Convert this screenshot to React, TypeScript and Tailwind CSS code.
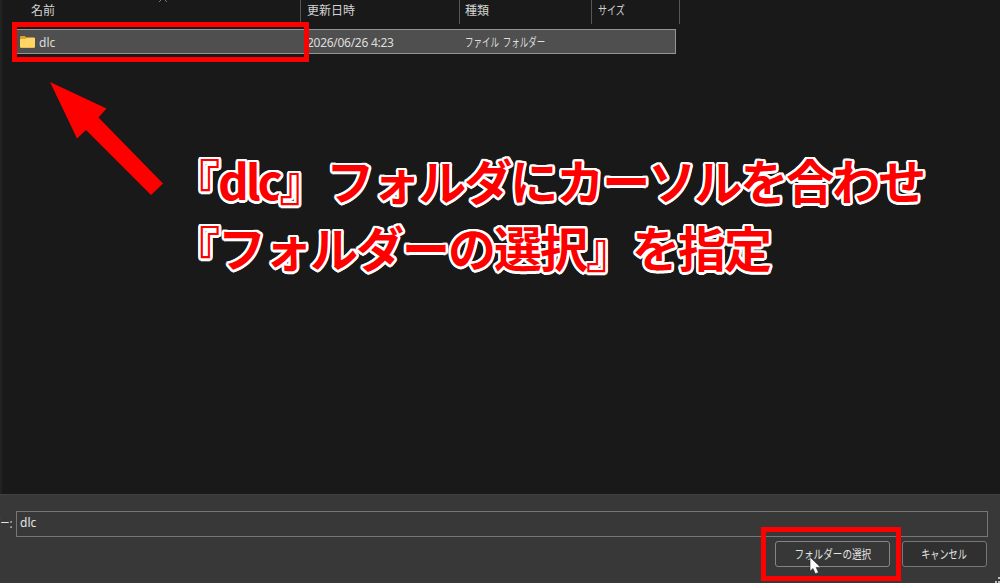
import type { ReactNode } from "react";

const uiFont = "font-['Noto_Sans','Noto_Sans_CJK_JP',sans-serif]";

function HeaderCell({ width, pad, children }: { width: string; pad: string; children: ReactNode }) {
  return (
    <div className={`h-6 shrink-0 border-r border-[#555] ${width} ${pad}`}>
      <span className="block text-[12px] leading-[22px] text-[#d4d4d4]">{children}</span>
    </div>
  );
}

function Folder() {
  return (
    <svg className="h-[12px] w-[15px] shrink-0" viewBox="0 0 15 12">
      <path d="M0 1.2Q0 0 1.2 0H4.8L6.5 1.5H13.8Q15 1.5 15 2.7V10.8Q15 12 13.8 12H1.2Q0 12 0 10.8Z" fill="#dda32d" />
      <path d="M0 4Q0 3 1 3H5.2L7 1.8H14Q15 1.8 15 3V10.5Q15 11.6 13.8 11.6H1.2Q0 11.6 0 10.5Z" fill="#ffd566" />
    </svg>
  );
}

function Caption() {
  return (
    <div className="absolute left-[172px] top-[146px] whitespace-nowrap font-['Noto_Sans_CJK_JP',sans-serif] text-[48px] font-bold leading-[67px] tracking-[-2px] text-[#ff0000] [text-shadow:2.5px_0_#fff,2.3px_1px_#fff,1.8px_1.8px_#fff,1px_2.3px_#fff,0_2.5px_#fff,-1px_2.3px_#fff,-1.8px_1.8px_#fff,-2.3px_1px_#fff,-2.5px_0_#fff,-2.3px_-1px_#fff,-1.8px_-1.8px_#fff,-1px_-2.3px_#fff,0_-2.5px_#fff,1px_-2.3px_#fff,1.8px_-1.8px_#fff,2.3px_-1px_#fff]">
      <div>
        『<span className="tracking-[-3.3px]">dlc</span>
        <span className="tracking-[-1.2px]">』</span>フォルダにカーソルを合わせ
      </div>
      <div>『フォルダーの選択』を指定</div>
    </div>
  );
}

export default function App() {
  return (
    <main className={`relative flex h-[583px] w-[1000px] flex-col overflow-hidden bg-[#191919] ${uiFont}`}>
      <section className="flex h-[494px] shrink-0 flex-col border-l-2 border-[#222]">
        <header className="flex h-[29px] shrink-0">
          <HeaderCell width="w-[299px]" pad="pl-[29px]">名前</HeaderCell>
          <HeaderCell width="w-[159px]" pad="pl-[6px]">更新日時</HeaderCell>
          <HeaderCell width="w-[132px]" pad="pl-[5px]">種類</HeaderCell>
          <HeaderCell width="w-[88px]" pad="pl-[6px]">
            <span className="inline-block origin-left scale-x-[.75]">サイズ</span>
          </HeaderCell>
        </header>
        <div className="ml-[14px] flex h-[25px] w-[660px] shrink-0 items-center border border-[#949494] bg-[#4f4f4f] text-[12px] leading-[18px] text-[#dedede]">
          <div className="flex w-[290px] items-center gap-1 pl-[3px]">
            <Folder />
            <span className="pt-[2px]">dlc</span>
          </div>
          <span className="w-[158px] pt-[2px] tracking-[-0.28px]">2026/06/26 4:23</span>
          <span className="origin-left scale-x-[.71] whitespace-nowrap pt-[2px] [word-spacing:2px]">ファイル フォルダー</span>
        </div>
      </section>
      <footer className="flex grow flex-col border-t border-[#404040] bg-[#383838] text-[12px] text-[#e4e4e4]">
        <div className="mt-[16px] flex h-[26px] items-center">
          <div className="flex w-4 shrink-0 justify-end overflow-hidden pr-1">
            <span className="origin-right scale-x-[.78] whitespace-nowrap">ダー:</span>
          </div>
          <div className="h-[26px] w-[972px] border border-[#777] pl-[3px] leading-[22px]">dlc</div>
        </div>
        <div className="mt-[4px] flex justify-end gap-3 pr-[13px]">
          <button className="flex h-[26px] w-[115px] items-center justify-center rounded-[3px] border border-[#858585] bg-[#373737]">
            <span className="scale-x-[.8] whitespace-nowrap pl-[2px] pt-[1px]">フォルダーの選択</span>
          </button>
          <button className="flex h-[26px] w-[85px] items-center justify-center rounded-[3px] border border-[#777] bg-[#303030]">
            <span className="scale-x-[.76] whitespace-nowrap pt-[1px]">キャンセル</span>
          </button>
        </div>
      </footer>
      <svg className="absolute left-[158px] top-0 h-[3px] w-[12px]" viewBox="0 0 12 3">
        <path d="M3 0L1 2M7 0L9 2" stroke="#777" fill="none" />
      </svg>
      <div className="absolute left-[12px] top-[22px] h-[40px] w-[297px] border-[5px] border-[#ff0000]" />
      <svg className="absolute left-[30px] top-[70px] h-[140px] w-[150px]" viewBox="0 0 150 140">
        <path d="M20 12L76.5 38.5L68.5 47.5L133 113.5L121 125L56 60L47 68.5Z" fill="#ff0000" />
      </svg>
      <Caption />
      <div className="absolute left-[761px] top-[527px] h-[54px] w-[140px] border-[5px] border-[#ff0000]" />
      <svg className="absolute left-[809px] top-[556px] h-[19px] w-[13px]" viewBox="0 0 13 19">
        <path d="M1 1V15.2L4 12.6L6.3 17.8L9.5 16.4L7.2 11.4H11.7Z" fill="#fff" stroke="#222" strokeWidth=".6" />
      </svg>
      <svg className="absolute left-[994px] top-[577px] h-[6px] w-[6px]" viewBox="0 0 6 6">
        <path d="M4 0h2v2h-2zM1 4h2v2h-2zM4 4h2v2h-2z" fill="#bbb" />
      </svg>
    </main>
  );
}
